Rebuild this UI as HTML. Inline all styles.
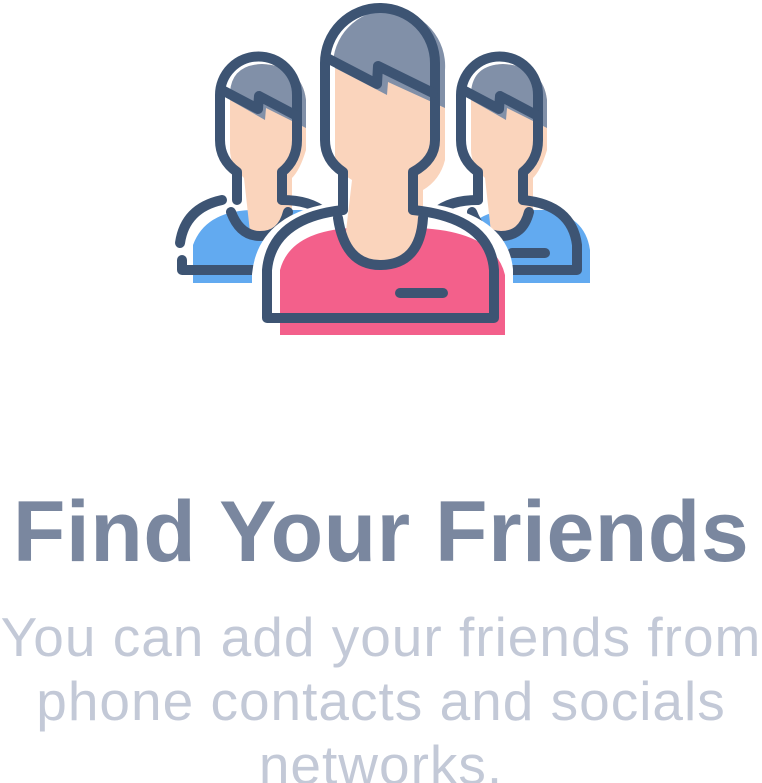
<!DOCTYPE html>
<html><head><meta charset="utf-8"><style>
html,body{margin:0;padding:0;background:#fff;width:762px;height:783px;overflow:hidden;position:relative;font-family:"Liberation Sans",Arial,sans-serif}
svg{position:absolute;left:0;top:0}
.t{position:absolute;left:0;width:762px;text-align:center;white-space:nowrap}
h1{margin:0;font-size:86px;font-weight:bold;color:#7a879f;top:487px;line-height:90px;letter-spacing:0.5px}
.s{font-size:55px;color:#c3c9d7;line-height:64px;top:605px;letter-spacing:1px}
</style></head><body>
<svg width="762" height="400" viewBox="0 0 762 400">
<g stroke-linecap="round" stroke-linejoin="round">
<path d="M193,283 V245 Q205,212 250,210 L300,210 Q330,212 340,240 V283 Z" fill="#62aaf0"/>
<path d="M230,100 Q232,65 262,64 Q302,66 306,100 V150 Q300,170 292,178 V215 Q275,240 250,232 L244,178 Q230,165 230,150 Z" fill="#fad4bc"/>
<path d="M230,92 Q232,65 262,64 Q302,66 306,100 V128 L266,108 L265,120 L230,100 Z" fill="#8190a8"/>
<path d="M460,283 V245 Q470,212 510,210 L545,210 Q585,215 590,250 V283 Z" fill="#62aaf0"/>
<path d="M471,100 Q473,65 503,64 Q543,66 547,100 V150 Q541,170 533,178 V215 Q516,240 491,232 L485,178 Q471,165 471,150 Z" fill="#fad4bc"/>
<path d="M471,92 Q473,65 503,64 Q543,66 547,100 V128 L507,108 L506,120 L471,100 Z" fill="#8190a8"/>
<g fill="none" stroke="#3d5473" stroke-width="10">
<path d="M237,200 V172 Q220,160 220,140 V95 A38.5,38.5 0 0 1 297,95 V140 Q297,160 282,172 V200"/>
<path d="M222,90 L258,109 L259,96 L297,116"/>
<path d="M222,200 Q185,208 180,243"/>
<path d="M182,260 V270 H270"/>
<path d="M231,212 Q240,236 260,236 Q282,236 288,212"/>
<path d="M282,200 Q310,200 325,213"/>
</g>
<g fill="none" stroke="#3d5473" stroke-width="10">
<path d="M478,200 V172 Q461,160 461,140 V95 A38.5,38.5 0 0 1 538,95 V140 Q538,160 523,172 V200"/>
<path d="M463,90 L499,109 L500,96 L538,116"/>
<path d="M523,200 Q572,205 577,245 V270 H500"/>
<path d="M472,212 Q481,236 501,236 Q523,236 529,212"/>
<path d="M478,200 Q450,200 435,213"/>
<path d="M512,253 H545"/>
</g>
<path d="M343,215 Q270,222 265,275 V320 H500 V270 Q495,222 413,215 Z" fill="#fff" stroke="#fff" stroke-width="26" stroke-linejoin="round"/>
<path d="M325,160 V63 A55,55 0 0 1 435,63 V160 L413,180 V215 H343 V180 Z" fill="#fff" stroke="#fff" stroke-width="20"/>
<path d="M280,335 V270 Q290,232 350,228 L420,228 Q495,232 505,275 V335 Z" fill="#f3608b"/>
<path d="M335,70 A55,55 0 0 1 445,70 V160 Q440,180 423,190 V225 Q425,262 380,265 Q340,262 345,240 L352,180 Q335,170 335,155 Z" fill="#fad4bc"/>
<path d="M333,62 A55,55 0 0 1 445,70 V108 L388,82 L387,95 L335,68 Z" fill="#8190a8"/>
<g fill="none" stroke="#3d5473" stroke-width="10">
<path d="M343,210 V172 Q325,160 325,140 V63 A55,55 0 0 1 435,63 V140 Q435,160 413,172 V210"/>
<path d="M327,58 L377,84 L378,66 L433,93"/>
<path d="M343,210 Q272,218 267,270 V318 H494 V270 Q490,218 413,210"/>
<path d="M338,218 Q345,265 380,265 Q420,265 423,218"/>
<path d="M400,293 H443"/>
</g>
</g>
</svg>
<h1 class="t">Find Your Friends</h1>
<div class="t s">You can add your friends from<br>phone contacts and socials<br>networks.</div>
</body></html>
